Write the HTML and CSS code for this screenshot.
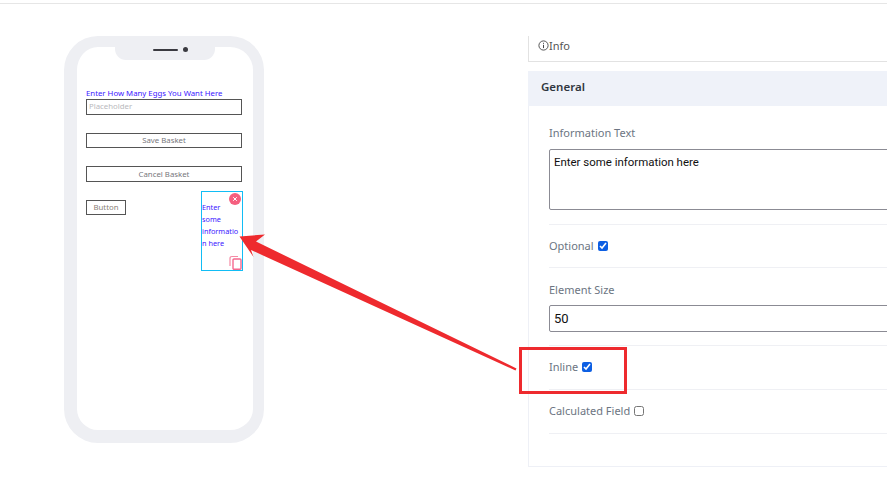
FILE: index.html
```html
<!DOCTYPE html>
<html lang="en">
<head>
<meta charset="utf-8">
<title>Element settings</title>
<link rel="stylesheet" href="styles.css">
</head>
<body>
<div class="page">
  <div class="stage">
    <div class="phone">
      <div class="notch"><span class="speaker"></span><span class="camera"></span></div>
      <div class="screen">
        <div class="egg-label">Enter How Many Eggs You Want Here</div>
        <div class="egg-input">Placeholder</div>
        <div class="wide-btn save">Save Basket</div>
        <div class="wide-btn cancel">Cancel Basket</div>
        <div class="inline-row">
          <div class="small-btn">Button</div>
          <div class="info-box">
            <span class="close">
              <svg width="6" height="6" viewBox="0 0 6 6"><path d="M1.2 1.2l3.6 3.6M4.8 1.2L1.2 4.8" stroke="#fff" stroke-width="1" fill="none"/></svg>
            </span>
            <div class="info-text">Enter<br>some<br>informatio<br>n here</div>
            <svg class="copy" width="13" height="15" viewBox="0 0 13 15">
              <path d="M9 1.5H3Q1 1.5 1 3.5V11" fill="none" stroke="#f58aa5" stroke-width="1.2"/>
              <rect x="4" y="4" width="8" height="10.2" rx="1" fill="#fff" stroke="#f5698f" stroke-width="1.4"/>
            </svg>
          </div>
        </div>
      </div>
    </div>
    <div class="panel">
      <div class="tab">
        <svg class="info-icon" width="11" height="11" viewBox="0 0 11 11">
          <circle cx="5.5" cy="5.5" r="4.6" fill="none" stroke="#444" stroke-width="0.9"/>
          <path d="M5.5 4.8v3.3M5.5 2.8v1" stroke="#444" stroke-width="1" fill="none"/>
        </svg>Info
      </div>
      <div class="section">
        <div class="section-head">General</div>
        <div class="section-body">
          <div class="field first">
            <label class="label block">Information Text</label>
            <textarea class="area" readonly>Enter some information here</textarea>
          </div>
          <div class="field check short"><span class="label">Optional</span><input class="box" type="checkbox" checked></div>
          <div class="field size">
            <label class="label block">Element Size</label>
            <input class="num" type="text" value="50" readonly>
          </div>
          <div class="field check"><span class="label">Inline</span><input class="box" type="checkbox" checked></div>
          <div class="field check"><span class="label">Calculated Field</span><input class="box" type="checkbox"></div>
        </div>
      </div>
    </div>
  </div>
  <div class="highlight"></div>
  <svg class="arrow" width="887" height="492" viewBox="0 0 887 492">
    <path d="M239.5 236.5L265 234.5L256 241.5L516.5 368.5L515.5 370.5L251 250L253.5 257Z" fill="#ee2a2e"/>
  </svg>
</div>
</body>
</html>
```
FILE: styles.css
```css
* { box-sizing: border-box; }
html, body { margin: 0; height: 100%; background: #fff; overflow: hidden; }
.page {
  position: relative;
  width: 887px;
  height: 492px;
  overflow: hidden;
  border-top: 1px solid #e6e6e6;
  margin-top: 3px;
  font-family: "Noto Sans", sans-serif;
}
.stage { display: flex; align-items: flex-start; padding: 32px 0 0 64px; }

.phone {
  flex: none;
  width: 200px;
  height: 407px;
  border-style: solid;
  border-color: #eeeff3;
  border-width: 11px 11px 13px 13px;
  border-radius: 34px;
  background: #fff;
  display: flex;
  flex-direction: column;
  align-items: center;
}
.notch {
  flex: none;
  width: 100px;
  height: 13px;
  background: #eeeff3;
  border-radius: 0 0 11px 11px;
  display: flex;
  justify-content: center;
  align-items: center;
  gap: 5px;
  padding: 0 0 8px 11px;
}
.speaker { width: 25px; height: 2px; border-radius: 1px; background: #3a3a40; }
.camera { width: 5px; height: 5px; border-radius: 50%; background: #3a3a40; }
.screen {
  align-self: stretch;
  padding: 27px 11px 0 9px;
  font-family: "Noto Sans", sans-serif;
  font-size: 7.8px;
}
.egg-label { color: #3b16ff; line-height: 12px; white-space: nowrap; }
.egg-input {
  height: 16px;
  border: 1px solid #555;
  color: #b9b9bd;
  line-height: 12px;
  padding-left: 2px;
}
.wide-btn {
  border: 1px solid #555;
  color: #77777c;
  text-align: center;
}
.save { height: 15px; line-height: 13px; margin-top: 18px; }
.cancel { height: 16px; line-height: 14px; margin-top: 18px; }
.inline-row {
  display: flex;
  justify-content: space-between;
  align-items: flex-start;
  margin-top: 9px;
  margin-right: -1px;
}
.small-btn {
  width: 40px;
  height: 15px;
  margin-top: 9px;
  border: 1px solid #555;
  color: #8a8078;
  text-align: center;
  line-height: 13px;
}
.info-box {
  position: relative;
  width: 42px;
  height: 80px;
  border: 1px solid #12bdf5;
  padding-top: 9px;
}
.info-text { color: #3b16ff; font-size: 7.3px; line-height: 12px; white-space: nowrap; }
.close {
  position: absolute;
  top: 1px;
  right: 1px;
  width: 12px;
  height: 12px;
  border-radius: 50%;
  background: #f55f7f;
  display: flex;
  align-items: center;
  justify-content: center;
}
.copy { position: absolute; right: 0; bottom: 0; }

.panel { flex: none; width: 420px; margin-left: 264px; }
.tab {
  height: 26px;
  border-left: 1px solid #e2e2e2;
  border-bottom: 1px solid #e2e2e2;
  padding: 0 0 7px 9px;
  font-size: 11px;
  color: #555;
  display: flex;
  align-items: center;
}
.info-icon { flex: none; }
.section { margin-top: 9px; }
.section-head {
  height: 35px;
  background: #eff2f9;
  font-size: 11.5px;
  font-weight: 600;
  line-height: 32px;
  color: #2f3640;
  padding-left: 13px;
}
.section-body {
  border-left: 1px solid #eef0f6;
  border-bottom: 1px solid #eef0f6;
  height: 361px;
  padding-left: 20px;
}
.field { border-bottom: 1px solid #eff0f4; }
.label { font-size: 11px; line-height: 16px; color: #6c7582; }
.block { display: block; }
.first { height: 119px; padding-top: 19px; }
.area {
  display: block;
  width: 100%;
  height: 61px;
  margin: 8px 0 0;
  border: 1px solid #8b8b94;
  border-radius: 2px;
  padding: 4px;
  font: 11.45px/16px Roboto, sans-serif;
  color: #111;
  resize: none;
  outline: none;
}
.check { height: 44px; display: flex; align-items: center; gap: 4px; padding-bottom: 2px; }
.short { height: 43px; padding-bottom: 0; }
.size { height: 78px; padding-top: 14px; }
.num {
  display: block;
  width: 100%;
  height: 27px;
  margin-top: 7px;
  border: 1px solid #8b8b94;
  border-radius: 2px;
  padding: 0 4px;
  font: 13px Roboto, sans-serif;
  color: #111;
  outline: none;
}
.box { width: 10px; height: 10px; margin: 0; accent-color: #0d5fe3; }

.highlight {
  position: absolute;
  left: 519px;
  top: 343px;
  width: 108px;
  height: 47px;
  border: 3px solid #ee2a2e;
}
.arrow { position: absolute; left: 0; top: -4px; pointer-events: none; }
```
